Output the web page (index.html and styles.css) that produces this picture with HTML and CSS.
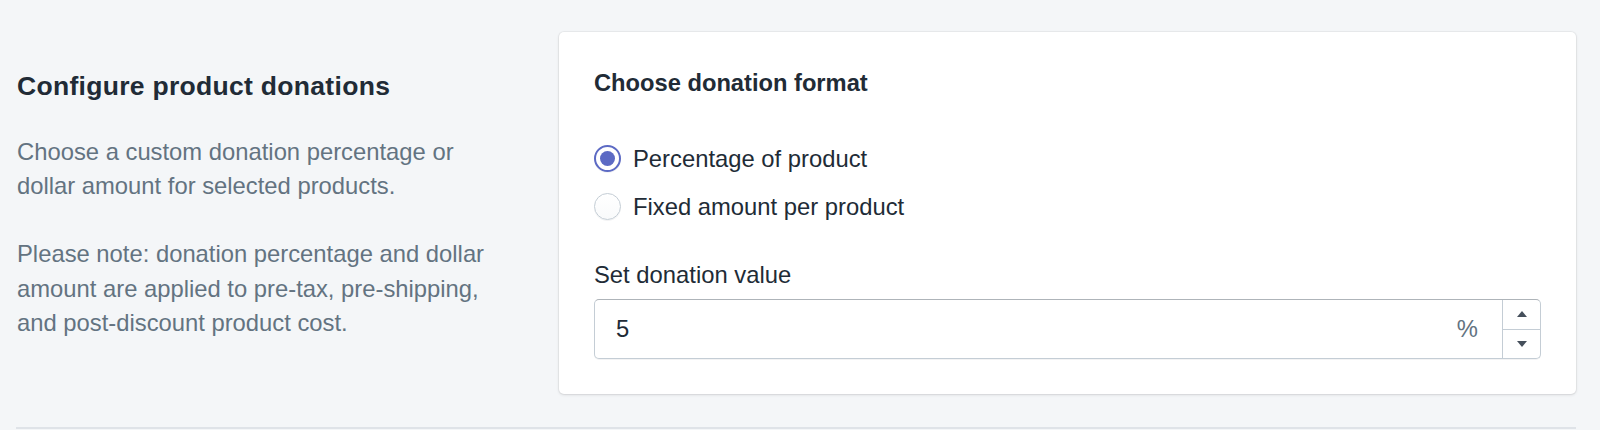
FILE: index.html
```html
<!DOCTYPE html>
<html lang="en">
<head>
<meta charset="UTF-8">
<meta name="viewport" content="width=device-width, initial-scale=1.0">
<title>Product Donations</title>
<link rel="stylesheet" href="styles.css">
</head>
<body>
    <div class="section">
        <div class="annotation">
            <h2 class="annotation-title">Configure product donations</h2>
            <p>Choose a custom donation percentage or dollar amount for selected products.</p>
            <p>Please note: donation percentage and dollar amount are applied to pre-tax, pre-shipping, and post-discount product cost.</p>
        </div>

        <div class="card">
            <h3 class="card-title">Choose donation format</h3>

            <ul class="choices">
                <li>
                    <label class="choice">
                        <input type="radio" name="format" value="percentage" checked>
                        <span class="radio"></span>
                        Percentage of product
                    </label>
                </li>
                <li>
                    <label class="choice">
                        <input type="radio" name="format" value="fixed">
                        <span class="radio"></span>
                        Fixed amount per product
                    </label>
                </li>
            </ul>

            <div class="field">
                <label for="donationValue">Set donation value</label>
                <div class="textfield">
                    <input type="text" id="donationValue" value="5">
                    <span class="suffix">%</span>
                    <div class="spinner">
                        <button class="spin" aria-label="Increase">
                            <svg width="10" height="6" viewBox="0 0 10 6"><path d="M0 6 L5 0 L10 6 Z"/></svg>
                        </button>
                        <button class="spin" aria-label="Decrease">
                            <svg width="10" height="6" viewBox="0 0 10 6"><path d="M0 0 L10 0 L5 6 Z"/></svg>
                        </button>
                    </div>
                </div>
            </div>
        </div>
    </div>
    <div class="divider"></div>
</body>
</html>
```

FILE: styles.css
```css
body {
    font-family: "Liberation Sans", Arial, sans-serif;
    background-color: #f4f6f8;
    color: #212b36;
    margin: 0;
}

.section {
    display: flex;
    padding: 32px 24px 33px 16px;
}

.annotation {
    width: 543px;
    flex-shrink: 0;
    padding: 37px 52px 0 1px;
    box-sizing: border-box;
}

.annotation-title {
    margin: 0 0 32px;
    font-size: 26.5px;
    line-height: 34px;
    letter-spacing: 0.3px;
    font-weight: bold;
    color: #212b36;
}

.annotation p {
    margin: 0 0 33.5px;
    font-size: 23.8px;
    line-height: 34.4px;
    color: #637381;
}

.card {
    flex: 1;
    background-color: #fff;
    border-radius: 5px;
    box-shadow: 0 0 0 1px rgba(63, 63, 68, 0.05), 0 1px 3px 0 rgba(63, 63, 68, 0.15);
    padding: 35px;
}

.card-title {
    margin: 0 0 34.5px;
    font-size: 23.7px;
    line-height: 33px;
    font-weight: bold;
}

.choices {
    list-style: none;
    margin: 0 0 27px;
    padding: 0;
}

.choices li {
    height: 48px;
    display: flex;
    align-items: center;
}

.choice {
    display: flex;
    align-items: center;
    font-size: 23.8px;
    line-height: 34px;
    cursor: pointer;
}

.choice input {
    display: none;
}

.radio {
    width: 27px;
    height: 27px;
    box-sizing: border-box;
    border-radius: 50%;
    border: 1px solid #c4cdd5;
    background: linear-gradient(#fff, #f9fafb);
    box-shadow: 0 1px 0 0 rgba(22, 29, 37, 0.05);
    margin-right: 12px;
    position: relative;
}

.choice input:checked + .radio {
    border: 2px solid #5c6ac4;
    background: #fff;
}

.choice input:checked + .radio::after {
    content: "";
    position: absolute;
    left: 4px;
    top: 4px;
    width: 15px;
    height: 15px;
    border-radius: 50%;
    background-color: #5c6ac4;
}

.field label {
    display: block;
    font-size: 23.8px;
    line-height: 34px;
    margin-bottom: 7.5px;
}

.textfield {
    display: flex;
    align-items: center;
    height: 60px;
    box-sizing: border-box;
    border: 1px solid #c4cdd5;
    border-top-color: #aeb4b9;
    border-radius: 5px;
    box-shadow: 0 1px 0 0 rgba(22, 29, 37, 0.05);
    background-color: #fff;
}

.textfield input[type="text"] {
    flex: 1;
    border: none;
    outline: none;
    background: transparent;
    padding: 0 0 0 21px;
    font-family: inherit;
    font-size: 23.8px;
    line-height: 34px;
    color: #212b36;
}

.suffix {
    font-size: 23.8px;
    color: #637381;
    margin-right: 24px;
}

.spinner {
    width: 37px;
    height: 100%;
    display: flex;
    flex-direction: column;
    border-left: 1px solid #c4cdd5;
}

.spin {
    flex: 1;
    display: flex;
    align-items: center;
    justify-content: center;
    border: none;
    background: none;
    padding: 0;
    margin: 0;
    cursor: pointer;
}

.spin + .spin {
    border-top: 1px solid #c4cdd5;
}

.spin svg {
    fill: #454f5b;
}

.divider {
    height: 2px;
    margin: 0 24px 0 16px;
    background-color: #dfe3e8;
}
```
